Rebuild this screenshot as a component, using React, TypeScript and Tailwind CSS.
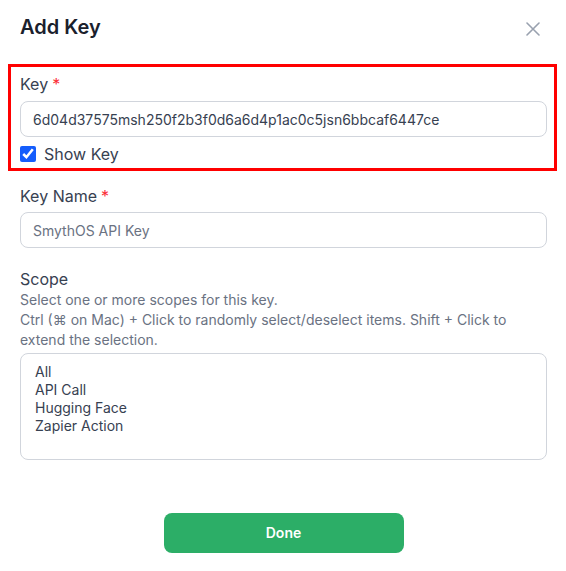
import { useState } from "react";

const scopes = ["All", "API Call", "Hugging Face", "Zapier Action"];

function Label({ text, required }: { text: string; required?: boolean }) {
  return (
    <label className="block text-base leading-6 text-[#374151]">
      {text}
      {required && <span className="ml-1 text-red-500">*</span>}
    </label>
  );
}

export default function App() {
  const [showKey, setShowKey] = useState(true);

  return (
    <div
      className="w-[566px] h-[571px] bg-white pl-5 pr-[19px] pt-[12px]"
      style={{ fontFamily: "Inter, 'Noto Sans', sans-serif" }}
    >
      {/* Header */}
      <div className="flex items-center justify-between h-[30px]">
        <h2 className="text-xl font-semibold text-[#1a202c]">Add Key</h2>
        <button className="mr-[7px] mt-[3px] text-gray-400">
          <svg width="14" height="14" viewBox="0 0 14 14" fill="none">
            <path d="M1 1L13 13M13 1L1 13" stroke="currentColor" strokeWidth="1.6" strokeLinecap="round" />
          </svg>
        </button>
      </div>

      {/* Key field, highlighted */}
      <div className="mt-[22px] -ml-[12px] -mr-[10px] border-[3px] border-[#ff0000] pl-[9px] pr-[7px] pt-[5px] pb-[2px]">
        <Label text="Key" required />
        <input
          readOnly
          value="6d04d37575msh250f2b3f0d6a6d4p1ac0c5jsn6bbcaf6447ce"
          className="mt-[5px] block w-full h-9 rounded-lg border border-gray-300 px-3 text-sm text-[#374151] outline-none"
        />
        <label className="mt-[5px] flex items-center h-6 gap-2 text-base text-[#374151]">
          <input
            type="checkbox"
            checked={showKey}
            onChange={(e) => setShowKey(e.target.checked)}
            className="h-4 w-4 accent-blue-600"
          />
          Show Key
        </label>
      </div>

      {/* Key Name */}
      <div className="mt-[13px]">
        <Label text="Key Name" required />
        <input
          readOnly
          placeholder="SmythOS API Key"
          className="mt-1 block w-full h-9 rounded-lg border border-gray-300 px-3 text-sm text-[#374151] placeholder:text-gray-500 outline-none"
        />
      </div>

      {/* Scope */}
      <div className="mt-5">
        <div className="text-base leading-[22px] text-[#374151]">Scope</div>
        <p className="text-sm leading-5 text-gray-500">
          Select one or more scopes for this key.
          <br />
          Ctrl (⌘ on Mac) + Click to randomly select/deselect items. Shift + Click to extend the selection.
        </p>
        <div className="mt-[3px] h-[107px] rounded-lg border border-gray-300 pl-[14px] pt-[9px]">
          {scopes.map((s) => (
            <div key={s} className="text-sm leading-[18px] text-[#374151]">
              {s}
            </div>
          ))}
        </div>
      </div>

      <div className="mt-[53px] flex justify-center">
        <button className="h-10 w-[240px] rounded-lg bg-[#2cae67] text-sm font-semibold text-white">
          Done
        </button>
      </div>
    </div>
  );
}
